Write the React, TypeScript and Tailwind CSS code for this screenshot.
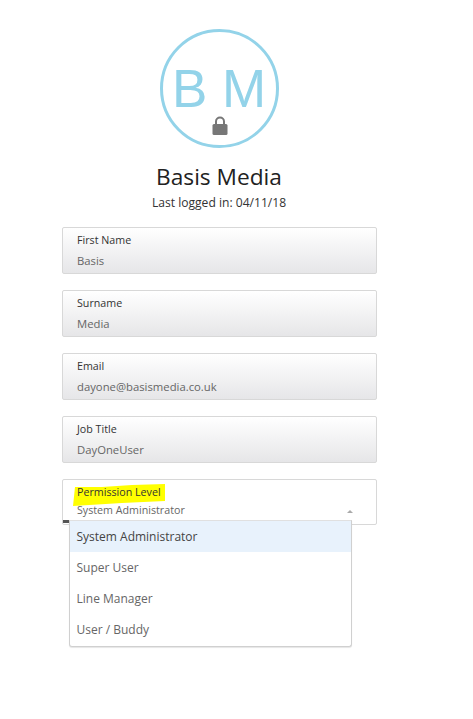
const fields = [
  { label: "First Name", value: "Basis" },
  { label: "Surname", value: "Media" },
  { label: "Email", value: "dayone@basismedia.co.uk" },
  { label: "Job Title", value: "DayOneUser" },
];

const options = ["System Administrator", "Super User", "Line Manager", "User / Buddy"];

function LockIcon() {
  return (
    <svg width="16" height="19" viewBox="0 0 16 19" className="absolute left-[49px] top-[84px]">
      <path d="M4 9V5.5a4 4 0 0 1 8 0V9" fill="none" stroke="#777" strokeWidth="2" />
      <rect x="0.5" y="8" width="15" height="11" rx="1.5" fill="#777" />
    </svg>
  );
}

function Field({ label, value }: { label: string; value: string }) {
  return (
    <div className="h-[47px] border border-[#d8d8d8] rounded-[2px] bg-gradient-to-b from-white to-[#e6e6e8] pl-[14.5px] pt-[5px]">
      <div className="text-[10.7px] leading-[15px] text-[#333]">{label}</div>
      <div className="text-[11.3px] leading-[15px] mt-[5px] text-[#666]">{value}</div>
    </div>
  );
}

export default function App() {
  return (
    <div className="w-[438px] h-[719px] bg-white flex flex-col items-center pt-[29px] font-['Open_Sans',sans-serif]">
      <div className="relative w-[119px] h-[119px] rounded-full border-[3px] border-[#93d3e9] flex justify-center">
        <span className="text-[53px] leading-[56px] mt-[29px] text-[#93d3e9] whitespace-nowrap font-['Liberation_Sans',sans-serif]">
          B M
        </span>
        <LockIcon />
      </div>

      <h1 className="mt-[13px] text-[22.7px] leading-[32px] text-[#222]">Basis Media</h1>
      <p className="mt-[1px] text-[12.1px] leading-[18px] text-[#333]">Last logged in: 04/11/18</p>

      <div className="mt-[15px] w-[315px] flex flex-col gap-[16px]">
        {fields.map((f) => (
          <Field key={f.label} label={f.label} value={f.value} />
        ))}

        <div className="relative h-[46px] border border-[#d8d8d8] rounded-[2px] bg-white pl-[14.5px] pt-[5px]">
          <svg width="94" height="24" viewBox="0 0 94 24" className="absolute left-[9px] top-[3px]">
            <path d="M3 4 L30 4 L60 2 L93 1 L93 18 L50 20 L1 23 Z" fill="#ffff00" />
          </svg>
          <div className="relative text-[10.7px] leading-[15px] text-[#333]">Permission Level</div>
          <div className="relative text-[10.7px] leading-[15px] mt-[3px] text-[#666]">System Administrator</div>
          <svg width="6" height="3" viewBox="0 0 6 3" className="absolute left-[284px] top-[30px]">
            <path d="M3 0 L6 3 H0 Z" fill="#aaa" />
          </svg>
          <div className="absolute left-0 top-[40px] w-[7px] h-[3px] bg-[#555]" />

          <ul className="absolute left-[6px] top-[40px] w-[283px] h-[127px] bg-white border border-[#d0d0d0] border-t-[#e0e0e0] rounded-b-[3px] shadow-[0_1px_1px_rgba(0,0,0,0.1)]">
            {options.map((o, i) => (
              <li
                key={o}
                className={
                  i === 0
                    ? "h-[31px] pl-[7px] text-[12px] leading-[31px] text-[#444] bg-[#e8f2fc]"
                    : "h-[31px] pl-[7px] text-[12px] leading-[31px] text-[#666]"
                }
              >
                {o}
              </li>
            ))}
          </ul>
        </div>
      </div>
    </div>
  );
}
